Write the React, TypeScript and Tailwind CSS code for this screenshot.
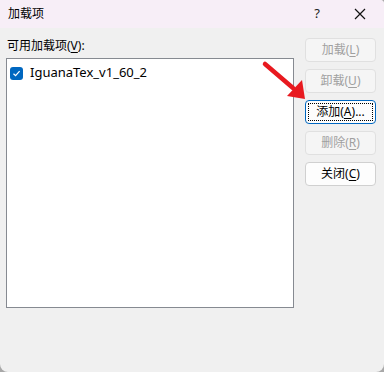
import React from 'react';

const font = { fontFamily: '"Noto Sans", "Noto Sans CJK SC", sans-serif' };

function Btn({ label, mn, suffix = '', disabled = false, focused = false }: { label: string; mn: string; suffix?: string; disabled?: boolean; focused?: boolean }) {
  return (
    <div
      className={
        'h-[24px] w-[71px] rounded-[4px] border flex items-center justify-center text-[12px] leading-none ' +
        (focused
          ? 'border-[#0067c0] border-[1.5px] bg-[#fdfdfd] text-black'
          : disabled
          ? 'border-[#e0e0e0] bg-[#f5f5f5] text-[#a0a0a0]'
          : 'border-[#d0d0d0] bg-[#fdfdfd] text-black')
      }
    >
      <div className={'flex items-center justify-center h-[18px] w-[65px] ' + (focused ? 'border border-dotted border-black' : '')}>
        {label}(<span className="underline underline-offset-2">{mn}</span>){suffix}
      </div>
    </div>
  );
}

export default function App() {
  return (
    <div className="w-[384px] h-[372px] bg-[#a8a8a8] relative" style={font}>
      <div className="w-full h-full rounded-b-[8px] rounded-tr-[4px] overflow-hidden flex flex-col bg-[#f0f0f0]">
        <div className="h-[28px] bg-[#f7eef7] flex items-center pl-[8px] text-[12px] text-black shrink-0">
          <span className="flex-1">加载项</span>
          <span className="w-[20px] text-[13px] text-[#222] mr-[27px] text-center">?</span>
          <svg width="12" height="12" viewBox="0 0 12 12" className="mr-[18px]">
            <path d="M1 1L11 11M11 1L1 11" stroke="#111" strokeWidth="1.2" />
          </svg>
        </div>
        <div className="flex pl-[6px] pt-[10px]">
          <div className="flex flex-col">
            <div className="text-[12px] text-black pl-[1px] h-[18px] leading-[16px]">
              可用加载项(<span className="underline underline-offset-2">V</span>):
            </div>
            <div className="w-[288px] h-[250px] bg-white border border-[#868a91] mt-[2px] pt-[6px] pl-[2px]">
              <div className="flex items-center h-[16px]">
                <div className="w-[13px] h-[13px] rounded-[3px] bg-[#0067c0] flex items-center justify-center ml-[1px]">
                  <svg width="9" height="9" viewBox="0 0 9 9">
                    <path d="M1.5 4.7L3.6 6.7L7.6 2.2" stroke="white" strokeWidth="1.2" fill="none" />
                  </svg>
                </div>
                <span className="ml-[7px] text-[13px] text-black" style={{ fontFamily: '"Noto Sans", sans-serif' }}>IguanaTex_v1_60_2</span>
              </div>
            </div>
          </div>
          <div className="flex flex-col gap-[7px] ml-[11px] pt-[0px]">
            <Btn label="加载" mn="L" disabled />
            <Btn label="卸载" mn="U" disabled />
            <Btn label="添加" mn="A" suffix="..." focused />
            <Btn label="删除" mn="R" disabled />
            <Btn label="关闭" mn="C" />
          </div>
        </div>
      </div>
      <svg className="absolute left-0 top-0 pointer-events-none" width="384" height="372">
        <line x1="265" y1="64" x2="293" y2="88" stroke="#e8191f" strokeWidth="4.5" strokeLinecap="round" />
        <polygon points="287,96 302,80 305,99" fill="#e8191f" />
      </svg>
    </div>
  );
}
